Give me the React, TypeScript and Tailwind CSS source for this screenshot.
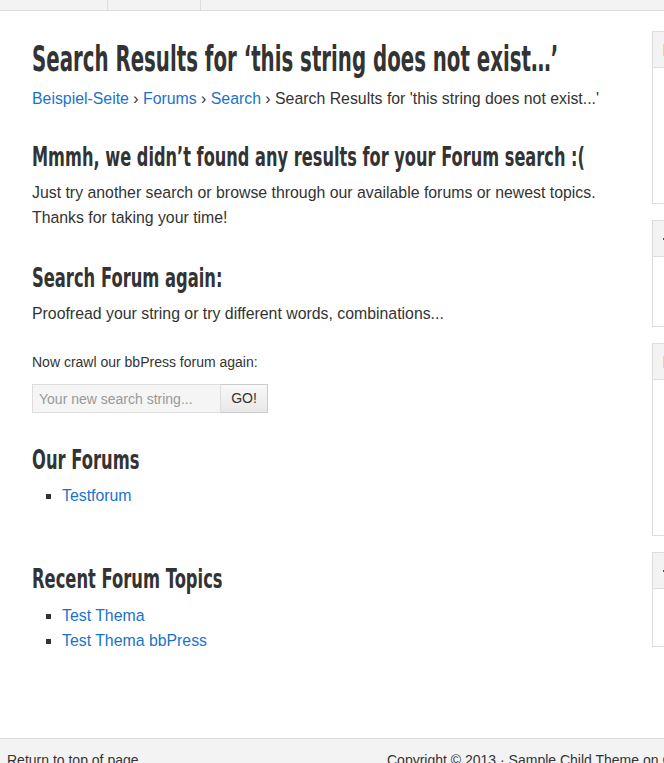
import React from "react";

const head =
  "font-['DejaVu_Sans',sans-serif] font-bold text-[#333] whitespace-nowrap origin-left";
const body = "font-['Liberation_Sans',Arial,sans-serif] text-[#333]";

function Widget({ bodyH, accent }: { bodyH: string; accent: boolean }) {
  return (
    <div className="border border-[#ddd] bg-white">
      <div className="h-[36px] bg-[#f3f3f3] border-b border-[#ddd] flex items-center pl-[10px]">
        <span className={accent ? "block w-[4px] h-[12px] bg-[#f0d58a]" : "block w-[4px] h-[2px] bg-[#555]"} />
      </div>
      <div className={bodyH} />
    </div>
  );
}

export default function App() {
  return (
    <div className={`w-[664px] h-[763px] overflow-hidden bg-white flex flex-col ${body}`}>
      <div className="h-[11px] shrink-0 bg-[#f3f3f3] border-b border-[#ddd] flex">
        <div className="w-[108px] border-r border-[#ddd]" />
        <div className="w-[93px] border-r border-[#ddd]" />
      </div>

      <div className="flex flex-1 overflow-hidden">
        <main className="w-[652px] shrink-0 pl-8 pr-4 pt-[28px]">
          <h1 className={`${head} text-[35px] leading-[40px] scale-x-[0.565]`}>
            Search Results for ‘this string does not exist…’
          </h1>
          <p className="mt-[7px] text-[15.85px] leading-[25px]">
            <a className="text-[#1a73c8]">Beispiel-Seite</a> ›{" "}
            <a className="text-[#1a73c8]">Forums</a> ›{" "}
            <a className="text-[#1a73c8]">Search</a> › Search Results for 'this string does not exist...'
          </p>

          <h2 className={`${head} mt-[29px] text-[27px] leading-[34px] scale-x-[0.6]`}>
            Mmmh, we didn’t found any results for your Forum search :(
          </h2>
          <p className="mt-[6px] text-[15.85px] leading-[25px]">
            Just try another search or browse through our available forums or newest topics.
            <br />
            Thanks for taking your time!
          </p>

          <h2 className={`${head} mt-[31px] text-[27px] leading-[34px] scale-x-[0.605]`}>Search Forum again:</h2>
          <p className="mt-[6px] text-[15.85px] leading-[25px]">
            Proofread your string or try different words, combinations...
          </p>

          <p className="mt-[26px] text-[14px] leading-[20px]">Now crawl our bbPress forum again:</p>
          <div className="mt-[12px] flex h-[29px]">
            <input
              className="w-[189px] h-full border border-[#ddd] bg-[#f5f5f5] px-[6px] text-[14px] text-[#333] placeholder:text-[#999] outline-none"
              placeholder="Your new search string..."
            />
            <button className="w-[47px] h-full border border-l-0 border-[#ccc] bg-gradient-to-b from-[#f8f8f8] to-[#e8e8e8] text-[14px] text-[#333]">
              GO!
            </button>
          </div>

          <h2 className={`${head} mt-[30px] text-[27px] leading-[34px] scale-x-[0.605]`}>Our Forums</h2>
          <ul className="mt-[6px] ml-[30px] list-[square] text-[15.85px] leading-[25px]">
            <li>
              <a className="text-[#1a73c8]">Testforum</a>
            </li>
          </ul>

          <h2 className={`${head} mt-[54px] text-[27px] leading-[34px] scale-x-[0.605]`}>Recent Forum Topics</h2>
          <ul className="mt-[7px] ml-[30px] list-[square] text-[15.85px] leading-[25px]">
            <li>
              <a className="text-[#1a73c8]">Test Thema</a>
            </li>
            <li>
              <a className="text-[#1a73c8]">Test Thema bbPress</a>
            </li>
          </ul>
        </main>

        <aside className="w-[300px] shrink-0 pt-[20px] flex flex-col gap-4">
          <Widget bodyH="h-[135px]" accent />
          <Widget bodyH="h-[69px]" accent={false} />
          <Widget bodyH="h-[155px]" accent />
          <Widget bodyH="h-[57px]" accent={false} />
        </aside>
      </div>

      <footer className="h-[25px] shrink-0 bg-[#f3f3f3] border-t border-[#ddd] flex text-[14px] leading-[20px] pt-[11px]">
        <div className="w-[387px] shrink-0 pl-[7px] whitespace-nowrap">Return to top of page</div>
        <div className="shrink-0 whitespace-nowrap">Copyright © 2013 · Sample Child Theme on Genesis Framework</div>
      </footer>
    </div>
  );
}
